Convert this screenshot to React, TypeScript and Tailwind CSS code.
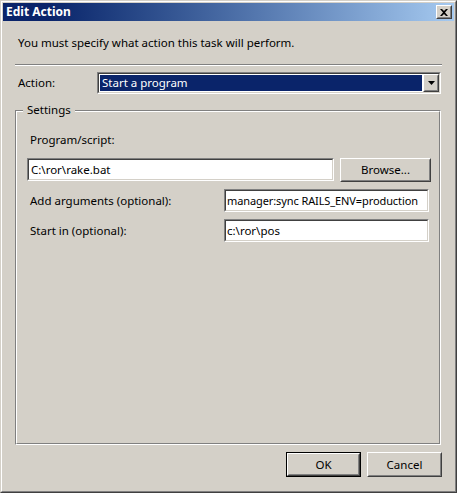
import React from "react";

const font = { fontFamily: '"Noto Sans", "Open Sans", sans-serif' };

function Sunken({ className = "", children }: { className?: string; children?: React.ReactNode }) {
  return (
    <div className={`border border-t-[#808080] border-l-[#808080] border-r-white border-b-white ${className}`}>
      <div className="h-full w-full border border-t-[#404040] border-l-[#404040] border-r-[#d4d0c8] border-b-[#d4d0c8] bg-white">
        {children}
      </div>
    </div>
  );
}

function Raised({ className = "", children, def = false }: { className?: string; children?: React.ReactNode; def?: boolean }) {
  const inner = (
    <div className="h-full w-full border border-t-white border-l-white border-r-[#404040] border-b-[#404040]">
      <div className="flex h-full w-full items-center justify-center border border-t-[#d4d0c8] border-l-[#d4d0c8] border-r-[#808080] border-b-[#808080] bg-[#d4d0c8] text-[11.5px] text-black">
        {children}
      </div>
    </div>
  );
  if (def) return <div className={`border border-black ${className}`}>{inner}</div>;
  return <div className={className}>{inner}</div>;
}

export default function App() {
  return (
    <div style={font} className="w-[457px] h-[493px] bg-[#d4d0c8] text-[11.5px] text-black">
      <div className="h-full w-full border border-t-[#d4d0c8] border-l-[#d4d0c8] border-r-[#404040] border-b-[#404040]">
        <div className="h-full w-full border border-t-white border-l-white border-r-[#808080] border-b-[#808080] p-[1px] flex flex-col">
          {/* Title bar */}
          <div className="h-[18px] flex items-center justify-between bg-gradient-to-r from-[#0a246a] from-10% to-[#a6caf0] pl-[3px] pr-[2px]">
            <span className="text-white font-bold text-[12px] leading-none">Edit Action</span>
            <Raised className="w-[16px] h-[14px]">
              <svg width="8" height="7" viewBox="0 0 8 7" className="block">
                <path d="M0 0h2l2 2 2-2h2L5 3.5 8 7H6L4 5 2 7H0l3-3.5z" fill="#000" />
              </svg>
            </Raised>
          </div>

          <div className="flex flex-col px-[12px]">
            <div className="mt-[14px] pl-[3px] leading-[16px]">You must specify what action this task will perform.</div>
            <div className="mt-[13px] h-[2px] border-t border-t-[#808080] border-b border-b-white" />

            <div className="mt-[6px] flex items-center h-[22px] mr-[1px]">
              <div className="w-[82px] shrink-0 pl-[3px]">Action:</div>
              <Sunken className="flex-1 h-[22px]">
                <div className="flex h-full w-full">
                  <div className="flex-1 p-[1px]">
                    <div className="h-full bg-[#0a246a] text-white flex items-center pl-[2px] leading-none">Start a program</div>
                  </div>
                  <Raised className="w-[16px] h-full">
                    <svg width="7" height="4" viewBox="0 0 7 4"><path d="M0 0h7L3.5 4z" fill="#000" /></svg>
                  </Raised>
                </div>
              </Sunken>
            </div>

            {/* Settings group */}
            <div className="relative mt-[16px] h-[335px] mr-[1px] border border-t-[#808080] border-l-[#808080] border-r-white border-b-white">
              <div className="h-full w-full border border-t-white border-l-white border-r-[#808080] border-b-[#808080] flex flex-col px-[10px]">
                <div className="absolute -top-[9px] left-[7px] bg-[#d4d0c8] px-[4px] leading-[16px]">Settings</div>
                <div className="mt-[20px] pl-[3px] leading-[16px]">Program/script:</div>
                <div className="mt-[10px] flex">
                  <Sunken className="w-[307px] shrink-0 h-[23px]">
                    <div className="pl-[2px] leading-[19px]">C:\ror\rake.bat</div>
                  </Sunken>
                  <Raised className="ml-[6px] w-[91px] shrink-0 h-[24px]">Browse...</Raised>
                </div>
                <div className="mt-[7px] flex items-center">
                  <div className="w-[197px] shrink-0 pl-[3px]">Add arguments (optional):</div>
                  <Sunken className="w-[205px] shrink-0 h-[23px]">
                    <div className="pl-[1px] leading-[19px] text-[11px] tracking-[-0.1px] whitespace-nowrap overflow-hidden">manager:sync RAILS_ENV=production</div>
                  </Sunken>
                </div>
                <div className="mt-[7px] flex items-center">
                  <div className="w-[197px] shrink-0 pl-[3px]">Start in (optional):</div>
                  <Sunken className="w-[205px] shrink-0 h-[23px]">
                    <div className="pl-[1px] leading-[19px]">c:\ror\pos</div>
                  </Sunken>
                </div>
              </div>
            </div>

            <div className="mt-[7px] flex justify-end gap-[6px]">
              <Raised def className="w-[75px] h-[25px]">OK</Raised>
              <Raised className="w-[75px] h-[25px]">Cancel</Raised>
            </div>
          </div>
        </div>
      </div>
    </div>
  );
}
